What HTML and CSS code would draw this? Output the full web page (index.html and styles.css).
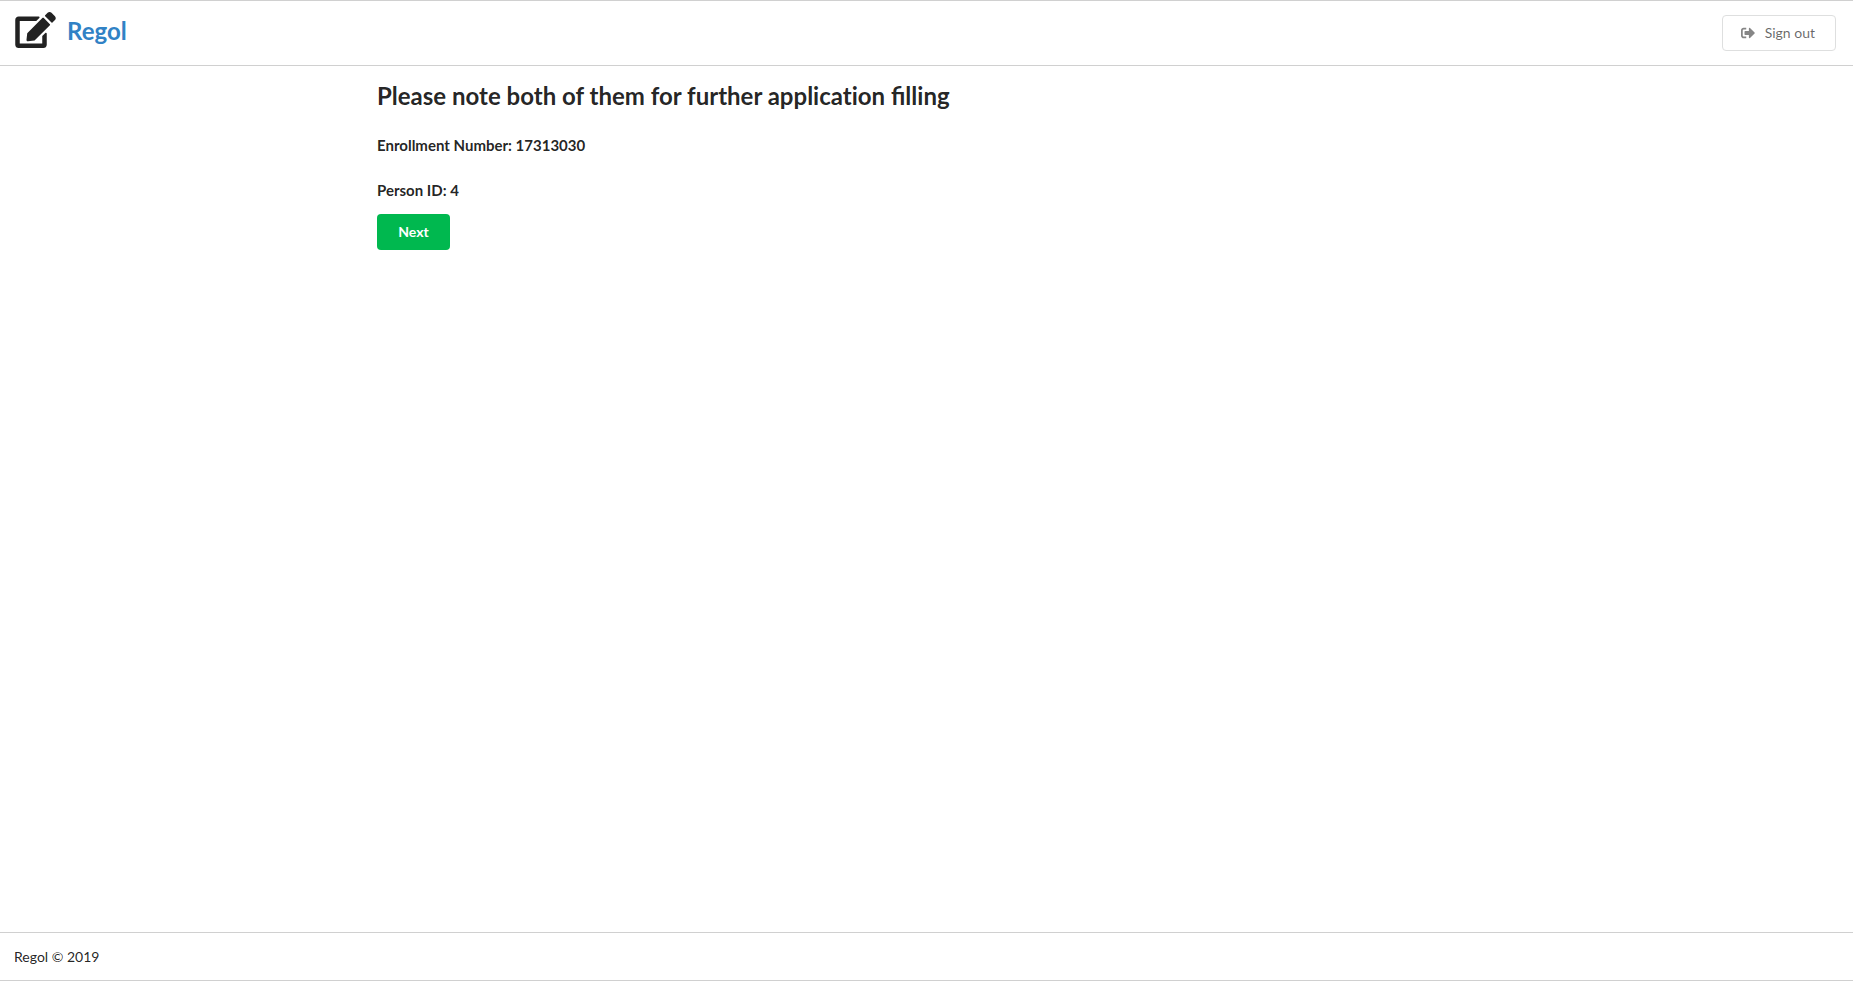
FILE: index.html
```html
<!DOCTYPE html>
<html lang="en">
<head>
<meta charset="utf-8">
<title>Regol</title>
<link rel="stylesheet" href="styles.css">
</head>
<body>
<header class="site-header">
  <a class="brand" href="#">
    <svg class="brand-icon" viewBox="0 0 576 512" aria-hidden="true"><path d="M402.6 83.2l90.2 90.2c3.8 3.8 3.8 10 0 13.8L274.4 405.6l-92.8 10.3c-12.4 1.4-22.9-9.1-21.5-21.5l10.3-92.8L388.8 83.2c3.8-3.8 10-3.8 13.8 0zm162-22.9l-48.8-48.8c-15.2-15.2-39.9-15.2-55.2 0l-35.4 35.4c-3.8 3.8-3.8 10 0 13.8l90.2 90.2c3.8 3.8 10 3.8 13.8 0l35.4-35.4c15.2-15.3 15.2-40 0-55.2zM384 346.2V448H64V128h229.8c3.2 0 6.2-1.3 8.5-3.5l40-40c7.6-7.6 2.2-20.5-8.5-20.5H48C21.5 64 0 85.5 0 112v352c0 26.5 21.5 48 48 48h352c26.5 0 48-21.5 48-48V306.2c0-10.7-12.9-16-20.5-8.5l-40 40c-2.2 2.3-3.5 5.3-3.5 8.5z"/></svg>
    <span class="brand-name">Regol</span>
  </a>
  <button class="button button-basic" type="button">
    <svg class="button-icon" viewBox="0 0 512 512" aria-hidden="true"><path d="M497 273L329 441c-15 15-41 4.5-41-17v-96H152c-13.3 0-24-10.7-24-24v-96c0-13.3 10.7-24 24-24h136V88c0-21.4 25.9-32 41-17l168 168c9.3 9.4 9.3 24.6 0 34zM192 436v-40c0-6.6-5.4-12-12-12H96c-17.7 0-32-14.3-32-32V160c0-17.7 14.3-32 32-32h84c6.6 0 12-5.4 12-12V76c0-6.6-5.4-12-12-12H96c-53 0-96 43-96 96v192c0 53 43 96 96 96h84c6.6 0 12-5.4 12-12z"/></svg>
    Sign out
  </button>
</header>
<main class="content">
  <h1 class="title">Please note both of them for further <span class="no-ligatures">application</span> filling</h1>
  <p class="detail">Enrollment Number: 17313030</p>
  <p class="detail">Person ID: 4</p>
  <button class="button button-primary" type="button">Next</button>
</main>
<footer class="site-footer">Regol © 2019</footer>
</body>
</html>
```
FILE: styles.css
```css
* {
  box-sizing: border-box;
}

body {
  display: flex;
  flex-direction: column;
  min-height: 100vh;
  margin: 0;
  background: #fff;
  color: rgba(0, 0, 0, 0.87);
  font-family: Lato, "Liberation Sans", sans-serif;
  font-size: 14px;
  line-height: 20px;
}

.site-header {
  display: flex;
  align-items: flex-start;
  justify-content: space-between;
  padding: 11px 17px 14px 15px;
  border-top: 1px solid #d0d0d0;
  border-bottom: 1px solid #d0d0d0;
}

.brand {
  display: flex;
  gap: 11px;
  text-decoration: none;
}

.brand-icon {
  width: 41px;
  height: 36px;
  fill: #222;
}

.brand-name {
  color: #3182c5;
  font-size: 24px;
  font-weight: 700;
  line-height: 38px;
}

.button {
  display: inline-flex;
  align-items: center;
  justify-content: center;
  height: 36px;
  min-width: 73px;
  padding: 0 21px;
  border: 0;
  border-radius: 4px;
  font: inherit;
  cursor: pointer;
}

.button-basic {
  gap: 10px;
  margin-top: 3px;
  padding: 0 20px 0 18px;
  border: 1px solid #dedfdf;
  background: #fff;
  color: rgba(0, 0, 0, 0.6);
}

.button-icon {
  width: 14px;
  height: 14px;
  fill: #868686;
}

.button-primary {
  background: #00b84f;
  color: #fff;
  font-weight: 700;
}

.content {
  flex: 1;
  width: 100%;
  max-width: 1127px;
  margin: 0 auto;
  padding: 14px;
}

.title {
  margin: 0 0 24px;
  font-size: 24px;
  font-weight: 700;
  line-height: 31px;
}

.no-ligatures {
  font-variant-ligatures: none;
}

.detail {
  margin: 0 0 25px;
  font-size: 15px;
  font-weight: 700;
  line-height: 20px;
}

.detail:last-of-type {
  margin-bottom: 14px;
}

.site-footer {
  padding: 14px 14px 13px;
  border-top: 1px solid #d0d0d0;
  border-bottom: 1px solid #d0d0d0;
}
```
